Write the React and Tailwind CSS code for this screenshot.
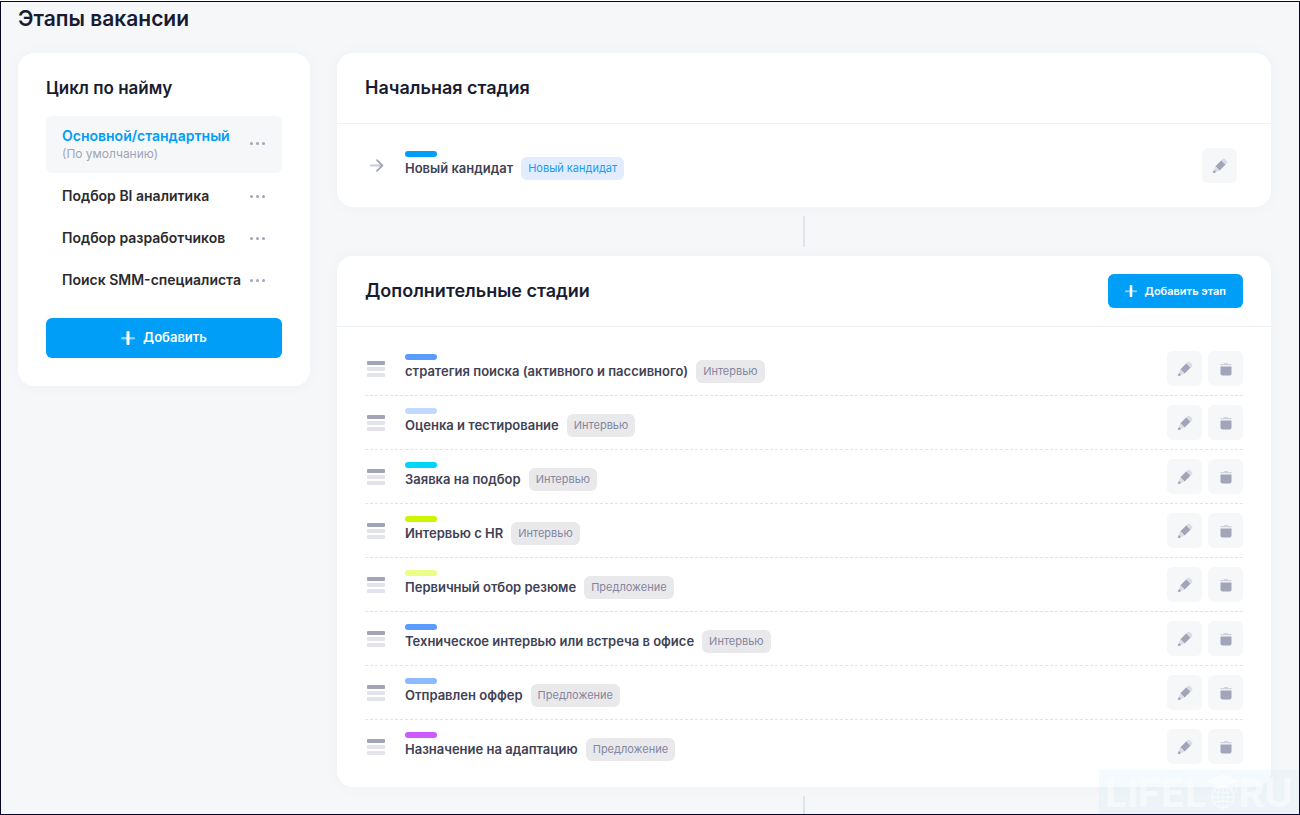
import clsx from 'clsx';

const CYCLES = [
  { name: 'Основной/стандартный', note: '(По умолчанию)', active: true },
  { name: 'Подбор BI аналитика' },
  { name: 'Подбор разработчиков' },
  { name: 'Поиск SMM-специалиста' },
];

const STAGES = [
  { name: 'стратегия поиска (активного и пассивного)', type: 'Интервью', bar: 'bg-[#5a9bff]' },
  { name: 'Оценка и тестирование', type: 'Интервью', bar: 'bg-[#c2d9ff]' },
  { name: 'Заявка на подбор', type: 'Интервью', bar: 'bg-[#00d5f7]' },
  { name: 'Интервью с HR', type: 'Интервью', bar: 'bg-[#cdf500]' },
  { name: 'Первичный отбор резюме', type: 'Предложение', bar: 'bg-[#eaff85]' },
  { name: 'Техническое интервью или встреча в офисе', type: 'Интервью', bar: 'bg-[#5a9bff]' },
  { name: 'Отправлен оффер', type: 'Предложение', bar: 'bg-[#8cb9ff]' },
  { name: 'Назначение на адаптацию', type: 'Предложение', bar: 'bg-[#cc5aff]' },
];

function PlusIcon({ className }) {
  return (
    <svg viewBox="0 0 14 14" className={className} aria-hidden="true">
      <rect x="0" y="6" width="14" height="2.4" rx="1" fill="#fff" opacity="0.5" />
      <rect x="5.5" y="0" width="3" height="14" rx="1" fill="#fff" />
    </svg>
  );
}

function PencilIcon() {
  return (
    <svg width="16" height="16" viewBox="0 0 16 16" aria-hidden="true">
      <g transform="translate(-0.5 0.5) rotate(45 8 8)">
        <rect x="5" y="-1" width="6" height="5" rx="1.4" fill="#dcdce6" />
        <rect x="5" y="2.6" width="6" height="8.2" fill="#a1a5b7" />
        <path d="M5 10.8h6L8.9 16H7.1z" fill="#dcdce6" />
        <path d="M6.6 14.3h2.8L8.8 16.8H7.2z" fill="#a1a5b7" />
      </g>
    </svg>
  );
}

function TrashIcon() {
  return (
    <svg width="16" height="16" viewBox="0 0 16 16" aria-hidden="true">
      <path d="M2.5 3h3l.8-.9h3.4l.8.9h3v1.200h-11z" fill="#d0d2dd" />
      <path d="M2.5 5.500h11v7a2 2 0 0 1-2 2h-7a2 2 0 0 1-2-2z" fill="#a1a5b7" />
    </svg>
  );
}

function ArrowIcon() {
  return (
    <svg width="14" height="14" viewBox="0 0 14 14" fill="none" strokeWidth="1.8" strokeLinecap="round" strokeLinejoin="round" aria-hidden="true">
      <path d="M1 6.5h11" stroke="#c9cbd6" />
      <path d="M7 1.2 12.3 6.5 7 11.8" stroke="#a1a5b7" />
    </svg>
  );
}

function IconButton({ label, children }) {
  return (
    <button type="button" aria-label={label}
      className="flex size-[35px] items-center justify-center rounded-md bg-[#f5f7f9] hover:bg-[#eaedf2]">
      {children}
    </button>
  );
}

function Card({ className, children }) {
  return (
    <section className={clsx('rounded-2xl bg-white shadow-[0_0_16px_rgba(76,87,125,0.03)]', className)}>
      {children}
    </section>
  );
}

function StageLabel({ name, type, bar, primary }) {
  return (
    <div className="flex min-w-0 flex-1 flex-col">
      <span className={clsx('h-1.5 w-8 rounded-full', bar)} />
      <div className="flex items-center gap-2">
        <span className="text-[13px] leading-[23px] font-semibold text-[#3f4254]">{name}</span>
        <span className={clsx('rounded-md px-[7px] text-[11px] leading-[23px]',
          primary ? 'bg-[#e1edff] text-[#1b9bf5]' : 'bg-[#e9e9ec] text-[#84869e]')}>
          {type}
        </span>
      </div>
    </div>
  );
}

function StageRow({ stage }) {
  return (
    <li className="flex h-[54px] items-center border-b border-dashed border-[#e1e3ea] last:border-transparent">
      <button type="button" aria-label="Переместить" className="mr-5 ml-0.5 flex w-[18px] cursor-grab flex-col gap-0.5">
        <span className="h-1 rounded-[1px] bg-[#a1a5b7]" />
        <span className="h-1 rounded-[1px] bg-[#e3e4eb]" />
        <span className="h-1 rounded-[1px] bg-[#e3e4eb]" />
      </button>
      <StageLabel {...stage} />
      <div className="flex gap-1.5">
        <IconButton label="Редактировать"><PencilIcon /></IconButton>
        <IconButton label="Удалить"><TrashIcon /></IconButton>
      </div>
    </li>
  );
}

function CycleItem({ cycle }) {
  return (
    <li className={clsx('flex items-center justify-between rounded-md pr-[17px] pl-4',
      cycle.active ? 'mb-0.5 h-[57px] bg-[#f5f7f9] pb-0.5' : 'h-[42px]')}>
      <a href="#" className="whitespace-nowrap">
        <span className={clsx('block text-[14px] leading-5 font-semibold', cycle.active ? 'text-[#009ef7]' : 'text-[#2b2b2f]')}>
          {cycle.name}
        </span>
        {cycle.note && <span className="block text-[12px] leading-4 text-[#a1a5b7]">{cycle.note}</span>}
      </a>
      <button type="button" aria-label="Действия" className="flex gap-[3px]">
        <span className="size-[3px] rounded-full bg-[#a1a5b7]" />
        <span className="size-[3px] rounded-full bg-[#a1a5b7]" />
        <span className="size-[3px] rounded-full bg-[#a1a5b7]" />
      </button>
    </li>
  );
}

function Watermark() {
  return (
    <div className="pointer-events-none absolute right-0 bottom-0 flex h-11 w-[200px] items-center justify-center bg-[#d5ecf8]/25 font-['Inter',sans-serif] text-[39px] leading-none font-bold text-white/50">
      <span>LIFEL</span>
      <svg width="32" height="36" viewBox="0 0 32 36" fill="none" stroke="currentColor" strokeWidth="1.3" aria-hidden="true">
        <path d="M1 7 16 1l15 6-15 6z" fill="currentColor" />
        <path d="M7 10v5q9-4 18 0v-5M29 8v11" />
        <circle cx="16" cy="23" r="11" />
        <ellipse cx="16" cy="23" rx="5" ry="11" />
        <path d="M5 23h22M16 12v22M7 17.5q9 3 18 0M7 28.5q9-3 18 0" />
      </svg>
      <span>RU</span>
    </div>
  );
}

export default function App() {
  return (
    <div className="min-h-screen bg-white pt-px font-['Inter','Roboto',sans-serif]">
      <div className="relative flex min-h-[calc(100vh-1px)] flex-col border border-[#06062e] bg-[#f5f7f9] pr-7 pl-[17px]">
        <h1 className="pt-[3px] text-[21px] leading-7 font-semibold text-[#181c32]">Этапы вакансии</h1>

        <div className="mt-5 flex flex-1 items-start gap-[27px]">
          {/* Hiring cycles */}
          <Card className="w-[292px] shrink-0 px-7 pt-[21px] pb-7">
            <h2 className="text-[17px] leading-7 font-semibold text-[#181c32]">Цикл по найму</h2>
            <ul className="mt-3.5">
              {CYCLES.map(c => <CycleItem key={c.name} cycle={c} />)}
            </ul>
            <button type="button"
              className="mt-[17px] flex h-10 w-full items-center justify-center gap-2 rounded-md bg-[#009ef7] text-[13px] font-semibold text-white hover:bg-[#0095e8]">
              <PlusIcon className="size-3.5" />
              Добавить
            </button>
          </Card>

          {/* Stages */}
          <div className="flex min-w-0 flex-1 flex-col items-center self-stretch">
            <Card className="w-full">
              <header className="flex h-[71px] items-center border-b border-[#eff2f5] px-7">
                <h2 className="text-[18px] leading-7 font-semibold text-[#181c32]">Начальная стадия</h2>
              </header>
              <div className="flex items-center py-6 pr-[34px] pl-[33px]">
                <span className="mr-[21px]"><ArrowIcon /></span>
                <StageLabel name="Новый кандидат" type="Новый кандидат" bar="bg-[#009ef7]" primary />
                <IconButton label="Редактировать"><PencilIcon /></IconButton>
              </div>
            </Card>

            <div className="my-[9px] h-[31px] w-0.5 bg-[#e1e3ea]" />

            <Card className="w-full">
              <header className="flex h-[71px] items-center justify-between border-b border-[#eff2f5] px-7">
                <h2 className="text-[18px] leading-7 font-semibold text-[#181c32]">Дополнительные стадии</h2>
                <button type="button"
                  className="flex h-[34px] items-center gap-2 rounded-md bg-[#009ef7] px-[17px] text-[11px] font-semibold text-white hover:bg-[#0095e8]">
                  <PlusIcon className="size-3" />
                  Добавить этап
                </button>
              </header>
              <ul className="px-7 pt-[15px] pb-[13px]">
                {STAGES.map(s => <StageRow key={s.name} stage={s} />)}
              </ul>
            </Card>

            <div className="mt-[9px] w-0.5 flex-1 bg-[#e1e3ea]" />
          </div>
        </div>

        <Watermark />
      </div>
    </div>
  );
}
